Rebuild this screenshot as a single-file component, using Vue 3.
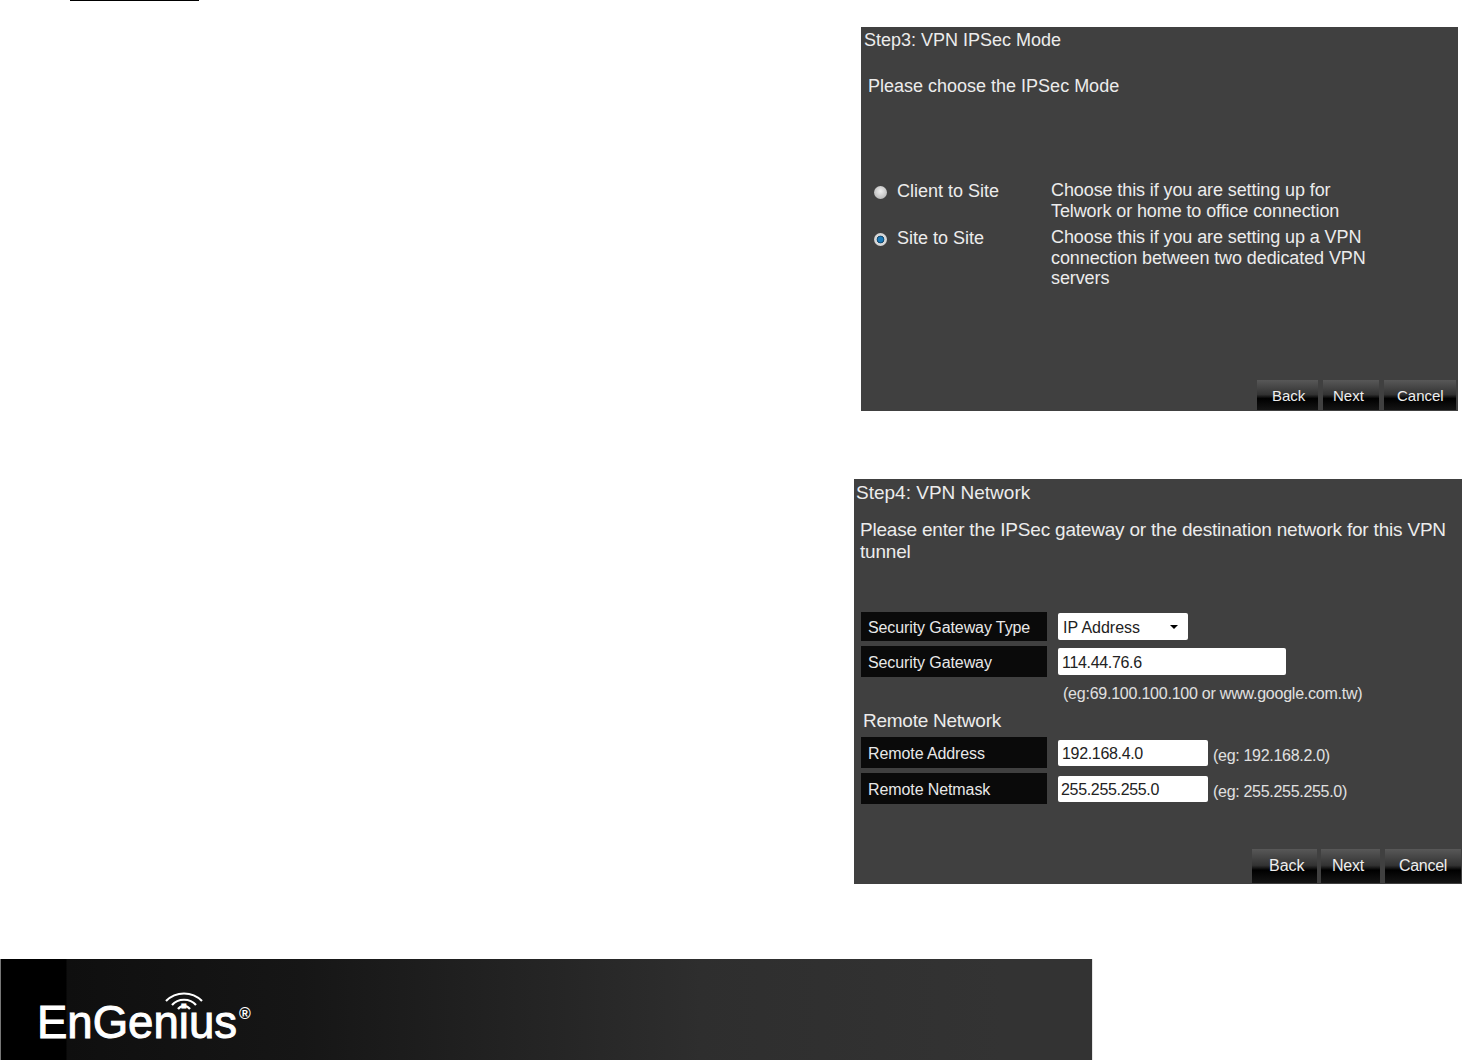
<script setup>
const modes = [
  { name: 'Client to Site', on: false, lines: ['Choose this if you are setting up for', 'Telwork or home to office connection'] },
  { name: 'Site to Site', on: true, lines: ['Choose this if you are setting up a VPN', 'connection between two dedicated VPN', 'servers'] },
]
</script>

<template>
  <div class="page">
    <div class="rule"></div>

    <section class="panel p3">
      <div class="title">Step3: VPN IPSec Mode</div>
      <div class="lead">Please choose the IPSec Mode</div>
      <div class="modes">
        <div v-for="m in modes" :key="m.name" class="mode">
          <span class="radio" :class="{ on: m.on }"></span>
          <span class="mode-name">{{ m.name }}</span>
          <div class="mode-desc">
            <div v-for="l in m.lines" :key="l">{{ l }}</div>
          </div>
        </div>
      </div>
      <div class="buttons b3">
        <button class="btn back">Back</button>
        <button class="btn next">Next</button>
        <button class="btn cancel">Cancel</button>
      </div>
    </section>

    <section class="panel p4">
      <div class="title">Step4: VPN Network</div>
      <div class="lead">Please enter the IPSec gateway or the destination network for this VPN<br>tunnel</div>

      <div class="form">
        <div class="row r1">
          <div class="label">Security Gateway Type</div>
          <div class="select">IP Address<span class="caret"></span></div>
        </div>
        <div class="row r2">
          <div class="label tall">Security Gateway</div>
          <div class="input wide">114.44.76.6</div>
        </div>
        <div class="hint">(eg:69.100.100.100 or www.google.com.tw)</div>
        <div class="subhead">Remote Network</div>
        <div class="row r3">
          <div class="label tall">Remote Address</div>
          <div class="input">192.168.4.0</div>
          <span class="eg">(eg: 192.168.2.0)</span>
        </div>
        <div class="row r4">
          <div class="label tall">Remote Netmask</div>
          <div class="input mask">255.255.255.0</div>
          <span class="eg">(eg: 255.255.255.0)</span>
        </div>
      </div>

      <div class="buttons b4">
        <button class="btn back">Back</button>
        <button class="btn next">Next</button>
        <button class="btn cancel">Cancel</button>
      </div>
    </section>

    <footer class="footer">
      <div class="logo">
        <svg class="wifi" width="42" height="20" viewBox="0 0 42 20" fill="none" stroke="#fff" stroke-width="2.2">
          <path d="M3 9 C13 -1 29 -1 39 9" />
          <path d="M9 13 C15 6 27 6 33 13" />
          <path d="M15 17 C18 13 24 13 27 17" />
        </svg>
        <span class="brand">EnGenius</span><span class="reg">®</span>
      </div>
    </footer>
  </div>
</template>

<style>
html, body { margin: 0; background: #fff; }
</style>

<style scoped>
.page {
  width: 1462px;
  height: 1060px;
  overflow: hidden;
  display: flex;
  flex-direction: column;
  background: #fff;
  font-family: "Liberation Sans", Arial, sans-serif;
}
.rule {
  width: 129px;
  height: 1px;
  margin-left: 70px;
  background: #000;
}
.panel {
  background: #404040;
  color: #ececec;
  display: flex;
  flex-direction: column;
  box-sizing: border-box;
  flex: none;
}
.p3 {
  width: 597px;
  height: 384px;
  margin: 26px 0 0 861px;
  padding: 2px 2px 1px 3px;
}
.p4 {
  width: 608px;
  height: 405px;
  margin: 68px 0 0 854px;
  padding: 3px 1px 1px 2px;
}
.title, .lead, .mode {
  font-size: 18px;
}
.title { line-height: 22px; }
.lead { line-height: 22px; margin: 24px 0 0 4px; }
.p4 .title { font-size: 19px; }
.p4 .lead { margin-top: 15px; font-size: 19px; letter-spacing: -0.2px; }

.modes { margin-top: 84px; margin-left: 10px; display: flex; flex-direction: column; gap: 7px; }
.mode { display: flex; align-items: flex-start; line-height: 20.5px; }
.radio {
  width: 13px;
  height: 13px;
  border-radius: 50%;
  margin-top: 5px;
  flex: none;
  background: radial-gradient(circle at 50% 40%, #eee, #aaa);
  box-sizing: border-box;
}
.radio.on {
  background: radial-gradient(circle, #1c7ab8 0 2.5px, #0e3a5a 3.5px, #dcdcdc 4.2px, #c4c4c4 100%);
}
.mode-name { width: 154px; margin-left: 10px; flex: none; }
.mode-desc { flex: 1; margin-top: -1px; letter-spacing: -0.1px; }

.buttons { margin-top: auto; display: flex; justify-content: flex-end; }
.btn {
  font-family: inherit;
  color: #eee;
  border: 0;
  padding: 0;
  text-align: left;
  background: linear-gradient(#585858 0, #333 48%, #000 62%, #141414 100%);
  font-size: 15px;
}
.b3 { gap: 5px; }
.b3 .btn { height: 30px; }
.b3 .back { width: 61px; padding-left: 15px; }
.b3 .next { width: 56px; padding-left: 10px; }
.b3 .cancel { width: 72px; padding-left: 13px; }
.b4 { gap: 4px; }
.b4 .btn { height: 34px; font-size: 16px; }
.b4 .back { width: 65px; padding-left: 17px; }
.b4 .next { width: 59px; padding-left: 11px; letter-spacing: -0.2px; }
.b4 .cancel { width: 76px; margin-left: 1px; padding-left: 14px; letter-spacing: -0.3px; }

.form { margin: 49px 0 0 5px; display: flex; flex-direction: column; }
.row { display: flex; align-items: center; }
.label {
  width: 186px;
  height: 29px;
  line-height: 31px;
  background: #0a0a0a;
  color: #e8e8e8;
  font-size: 16px;
  letter-spacing: -0.1px;
  padding-left: 7px;
  box-sizing: border-box;
  margin-right: 11px;
  flex: none;
}
.label.tall { height: 31px; line-height: 33px; }
.r2 { margin-top: 5px; }
.select, .input {
  background: #fff;
  color: #222;
  font-size: 16px;
  border-radius: 2px;
  box-sizing: border-box;
}
.select {
  width: 130px;
  height: 27px;
  line-height: 29px;
  padding-left: 5px;
  position: relative;
}
.caret {
  position: absolute;
  right: 10px;
  top: 12px;
  border: 4.5px solid transparent;
  border-top-color: #000;
  border-bottom: 0;
}
.input {
  width: 150px;
  height: 26px;
  line-height: 28px;
  padding-left: 4px;
  letter-spacing: -0.33px;
}
.input.wide { width: 228px; height: 27px; line-height: 29px; }
.input.mask { padding-left: 3px; }
.eg { font-size: 16px; color: #e0e0e0; margin-left: 5px; padding-top: 6px; letter-spacing: -0.3px; }
.hint {
  font-size: 16px;
  color: #e0e0e0;
  margin: 7px 0 0 202px;
  line-height: 20px;
  letter-spacing: -0.23px;
}
.subhead { margin: 5px 0 0 2px; line-height: 24px; font-size: 19px; letter-spacing: -0.25px; }
.r3 { margin-top: 4px; }
.r4 { margin-top: 5px; }

.footer {
  margin-top: 75px;
  width: 1093px;
  height: 101px;
  flex: none;
  box-sizing: border-box;
  border-left: 1px solid #777;
  border-right: 1px solid #e5e5e5;
  background: linear-gradient(90deg, #000 0, #000 65px, #0f0f0f 66px, #161616 300px, #2e2e2e 700px, #333 1000px);
}
.logo {
  position: relative;
  margin: 36px 0 0 36px;
  width: 220px;
  color: #fff;
  display: flex;
  align-items: flex-start;
}
.brand {
  font-size: 46px;
  line-height: 54px;
  transform: scaleX(0.99);
  transform-origin: left top;
  display: block;
  -webkit-text-stroke: 1px #fff;
}
.reg {
  position: absolute;
  left: 202px;
  top: 10px;
  font-size: 16px;
  font-weight: bold;
}
.wifi {
  position: absolute;
  left: 126px;
  top: -3px;
}
</style>
